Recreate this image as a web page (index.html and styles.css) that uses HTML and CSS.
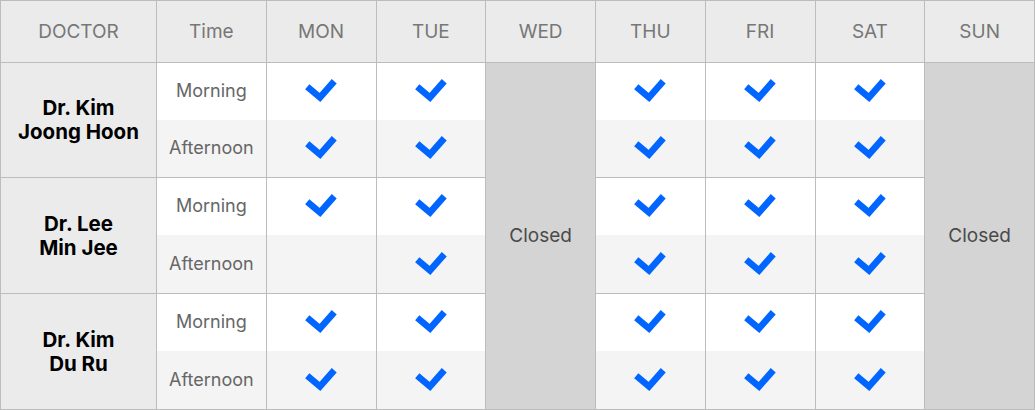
FILE: index.html
```html
<!DOCTYPE html>
<html lang="en">
<head>
<meta charset="utf-8">
<title>Doctor Schedule</title>
<link rel="stylesheet" href="styles.css">
</head>
<body>
<table class="schedule">
  <colgroup>
    <col class="col-doc"><col class="col-day"><col class="col-day"><col class="col-day"><col class="col-day"><col class="col-day"><col class="col-day"><col class="col-day"><col class="col-day">
  </colgroup>
  <thead>
    <tr class="head">
      <th>DOCTOR</th><th>Time</th><th>MON</th><th>TUE</th><th>WED</th><th>THU</th><th>FRI</th><th>SAT</th><th>SUN</th>
    </tr>
  </thead>
  <tbody>
    <tr class="am">
      <td class="doc" rowspan="2">Dr. Kim<br>Joong Hoon</td>
      <td class="slot time">Morning</td>
      <td class="slot"><svg class="chk" viewBox="0 0 32 24"><polyline points="2.25,7.75 15,18.5 29.25,2.25"/></svg></td>
      <td class="slot"><svg class="chk" viewBox="0 0 32 24"><polyline points="2.25,7.75 15,18.5 29.25,2.25"/></svg></td>
      <td class="closed" rowspan="6">Closed</td>
      <td class="slot"><svg class="chk" viewBox="0 0 32 24"><polyline points="2.25,7.75 15,18.5 29.25,2.25"/></svg></td>
      <td class="slot"><svg class="chk" viewBox="0 0 32 24"><polyline points="2.25,7.75 15,18.5 29.25,2.25"/></svg></td>
      <td class="slot"><svg class="chk" viewBox="0 0 32 24"><polyline points="2.25,7.75 15,18.5 29.25,2.25"/></svg></td>
      <td class="closed" rowspan="6">Closed</td>
    </tr>
    <tr class="pm first-pm">
      <td class="slot time">Afternoon</td>
      <td class="slot"><svg class="chk" viewBox="0 0 32 24"><polyline points="2.25,7.75 15,18.5 29.25,2.25"/></svg></td>
      <td class="slot"><svg class="chk" viewBox="0 0 32 24"><polyline points="2.25,7.75 15,18.5 29.25,2.25"/></svg></td>
      <td class="slot"><svg class="chk" viewBox="0 0 32 24"><polyline points="2.25,7.75 15,18.5 29.25,2.25"/></svg></td>
      <td class="slot"><svg class="chk" viewBox="0 0 32 24"><polyline points="2.25,7.75 15,18.5 29.25,2.25"/></svg></td>
      <td class="slot"><svg class="chk" viewBox="0 0 32 24"><polyline points="2.25,7.75 15,18.5 29.25,2.25"/></svg></td>
    </tr>
    <tr class="am">
      <td class="doc" rowspan="2">Dr. Lee<br>Min Jee</td>
      <td class="slot time">Morning</td>
      <td class="slot"><svg class="chk" viewBox="0 0 32 24"><polyline points="2.25,7.75 15,18.5 29.25,2.25"/></svg></td>
      <td class="slot"><svg class="chk" viewBox="0 0 32 24"><polyline points="2.25,7.75 15,18.5 29.25,2.25"/></svg></td>
      <td class="slot"><svg class="chk" viewBox="0 0 32 24"><polyline points="2.25,7.75 15,18.5 29.25,2.25"/></svg></td>
      <td class="slot"><svg class="chk" viewBox="0 0 32 24"><polyline points="2.25,7.75 15,18.5 29.25,2.25"/></svg></td>
      <td class="slot"><svg class="chk" viewBox="0 0 32 24"><polyline points="2.25,7.75 15,18.5 29.25,2.25"/></svg></td>
    </tr>
    <tr class="pm">
      <td class="slot time">Afternoon</td>
      <td class="slot"></td>
      <td class="slot"><svg class="chk" viewBox="0 0 32 24"><polyline points="2.25,7.75 15,18.5 29.25,2.25"/></svg></td>
      <td class="slot"><svg class="chk" viewBox="0 0 32 24"><polyline points="2.25,7.75 15,18.5 29.25,2.25"/></svg></td>
      <td class="slot"><svg class="chk" viewBox="0 0 32 24"><polyline points="2.25,7.75 15,18.5 29.25,2.25"/></svg></td>
      <td class="slot"><svg class="chk" viewBox="0 0 32 24"><polyline points="2.25,7.75 15,18.5 29.25,2.25"/></svg></td>
    </tr>
    <tr class="am">
      <td class="doc" rowspan="2">Dr. Kim<br>Du Ru</td>
      <td class="slot time">Morning</td>
      <td class="slot"><svg class="chk" viewBox="0 0 32 24"><polyline points="2.25,7.75 15,18.5 29.25,2.25"/></svg></td>
      <td class="slot"><svg class="chk" viewBox="0 0 32 24"><polyline points="2.25,7.75 15,18.5 29.25,2.25"/></svg></td>
      <td class="slot"><svg class="chk" viewBox="0 0 32 24"><polyline points="2.25,7.75 15,18.5 29.25,2.25"/></svg></td>
      <td class="slot"><svg class="chk" viewBox="0 0 32 24"><polyline points="2.25,7.75 15,18.5 29.25,2.25"/></svg></td>
      <td class="slot"><svg class="chk" viewBox="0 0 32 24"><polyline points="2.25,7.75 15,18.5 29.25,2.25"/></svg></td>
    </tr>
    <tr class="pm">
      <td class="slot time">Afternoon</td>
      <td class="slot"><svg class="chk" viewBox="0 0 32 24"><polyline points="2.25,7.75 15,18.5 29.25,2.25"/></svg></td>
      <td class="slot"><svg class="chk" viewBox="0 0 32 24"><polyline points="2.25,7.75 15,18.5 29.25,2.25"/></svg></td>
      <td class="slot"><svg class="chk" viewBox="0 0 32 24"><polyline points="2.25,7.75 15,18.5 29.25,2.25"/></svg></td>
      <td class="slot"><svg class="chk" viewBox="0 0 32 24"><polyline points="2.25,7.75 15,18.5 29.25,2.25"/></svg></td>
      <td class="slot"><svg class="chk" viewBox="0 0 32 24"><polyline points="2.25,7.75 15,18.5 29.25,2.25"/></svg></td>
    </tr>
  </tbody>
</table>
</body>
</html>
```

FILE: styles.css
```css
html, body {
  margin: 0;
  padding: 0;
  background: #ffffff;
}

body {
  font-family: Inter, "Noto Sans", "Liberation Sans", sans-serif;
}

.schedule {
  width: 1035px;
  border-collapse: collapse;
  table-layout: fixed;
}

.col-doc {
  width: 156px;
}

.schedule th,
.schedule td {
  border: 1px solid #bcbcbc;
  padding: 0;
  text-align: center;
  vertical-align: middle;
  line-height: 22px;
}

.head {
  height: 62px;
}

.head th {
  background: #ebebeb;
  color: #777777;
  font-size: 19px;
  font-weight: 400;
}

.schedule tbody tr.am {
  height: 57px;
}

.schedule tbody tr.pm {
  height: 59px;
}

.schedule tbody tr.first-pm {
  height: 58px;
}

.am td {
  background: #ffffff;
}

.pm td {
  background: #f4f4f4;
}

.schedule .am .slot {
  border-bottom-style: none;
}

.schedule .pm .slot {
  border-top-style: none;
}

.schedule td.doc {
  background: #ebebeb;
  color: #000000;
  font-size: 20.5px;
  font-weight: 700;
  line-height: 24px;
}

.time {
  color: #666666;
  font-size: 18px;
}

.schedule td.closed {
  background: #d4d4d4;
  color: #4a4a4a;
  font-size: 19px;
}

.chk {
  display: block;
  width: 32px;
  height: 24px;
  margin: 0 auto;
}

.chk polyline {
  fill: none;
  stroke: #0066ff;
  stroke-width: 6.6;
  stroke-linejoin: miter;
  stroke-linecap: butt;
}
```
